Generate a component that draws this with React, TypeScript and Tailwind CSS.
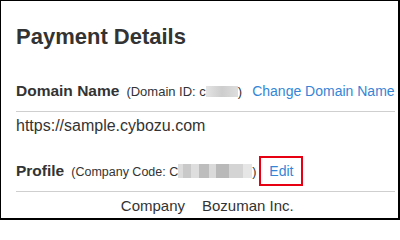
import React from "react";

export default function App() {
  return (
    <div
      className="w-[400px] h-[220px] overflow-hidden bg-white border-l border-t border-r-2 border-b-2 border-black pl-[15px] pr-[3px] text-[#333333]"
      style={{ fontFamily: '"Liberation Sans", Arial, sans-serif' }}
    >
      <h1 className="mt-[24px] text-[22px] leading-[24px] font-bold">Payment Details</h1>

      <div className="mt-[32px] flex items-baseline whitespace-nowrap border-b border-[#cfcfcf] pb-[9px]">
        <span className="text-[15.5px] leading-[20px] font-bold">Domain Name</span>
        <span className="ml-[7px] text-[13px] leading-[20px]">
          (Domain ID: c
          <span className="inline-block w-[32px] h-[11px] align-[-1px] bg-gradient-to-r from-[#e4e4e4] via-[#cdcdcd] to-[#dedede]" />)
        </span>
        <span className="ml-[10px] text-[14px] leading-[20px] text-[#3585d6]">Change Domain Name</span>
      </div>

      <div className="mt-[4px] text-[16px] leading-[20px]">https://sample.cybozu.com</div>

      <div className="mt-[20px] flex items-baseline whitespace-nowrap border-b border-[#cfcfcf] pb-[5px]">
        <span className="text-[15.5px] leading-[20px] font-bold">Profile</span>
        <span className="ml-[7px] text-[12.5px] leading-[20px]">
          (Company Code: C
          <span className="inline-flex h-[14px] w-[74px] align-[-2px]">
            <span className="w-[5px] bg-[#dcdcdc]" />
            <span className="w-[8px] bg-[#c9c9c9]" />
            <span className="w-[8px] bg-[#dedede]" />
            <span className="w-[10px] bg-[#bdbdbd]" />
            <span className="w-[7px] bg-[#dadada]" />
            <span className="w-[13px] bg-[#b9b9b9]" />
            <span className="w-[14px] bg-[#d4d4d4]" />
            <span className="w-[9px] bg-[#e6e6e6]" />
          </span>
          )
        </span>
        <span className="ml-[3px] inline-block h-[30px] w-[44px] border-2 border-[#e60012] text-center text-[14px] leading-[26px] text-[#3585d6]">
          Edit
        </span>
      </div>

      <div className="mt-[4px] flex whitespace-nowrap text-[15px] leading-[20px]">
        <span className="w-[169px] text-right">Company</span>
        <span className="ml-[17px]">Bozuman Inc.</span>
      </div>
    </div>
  );
}
